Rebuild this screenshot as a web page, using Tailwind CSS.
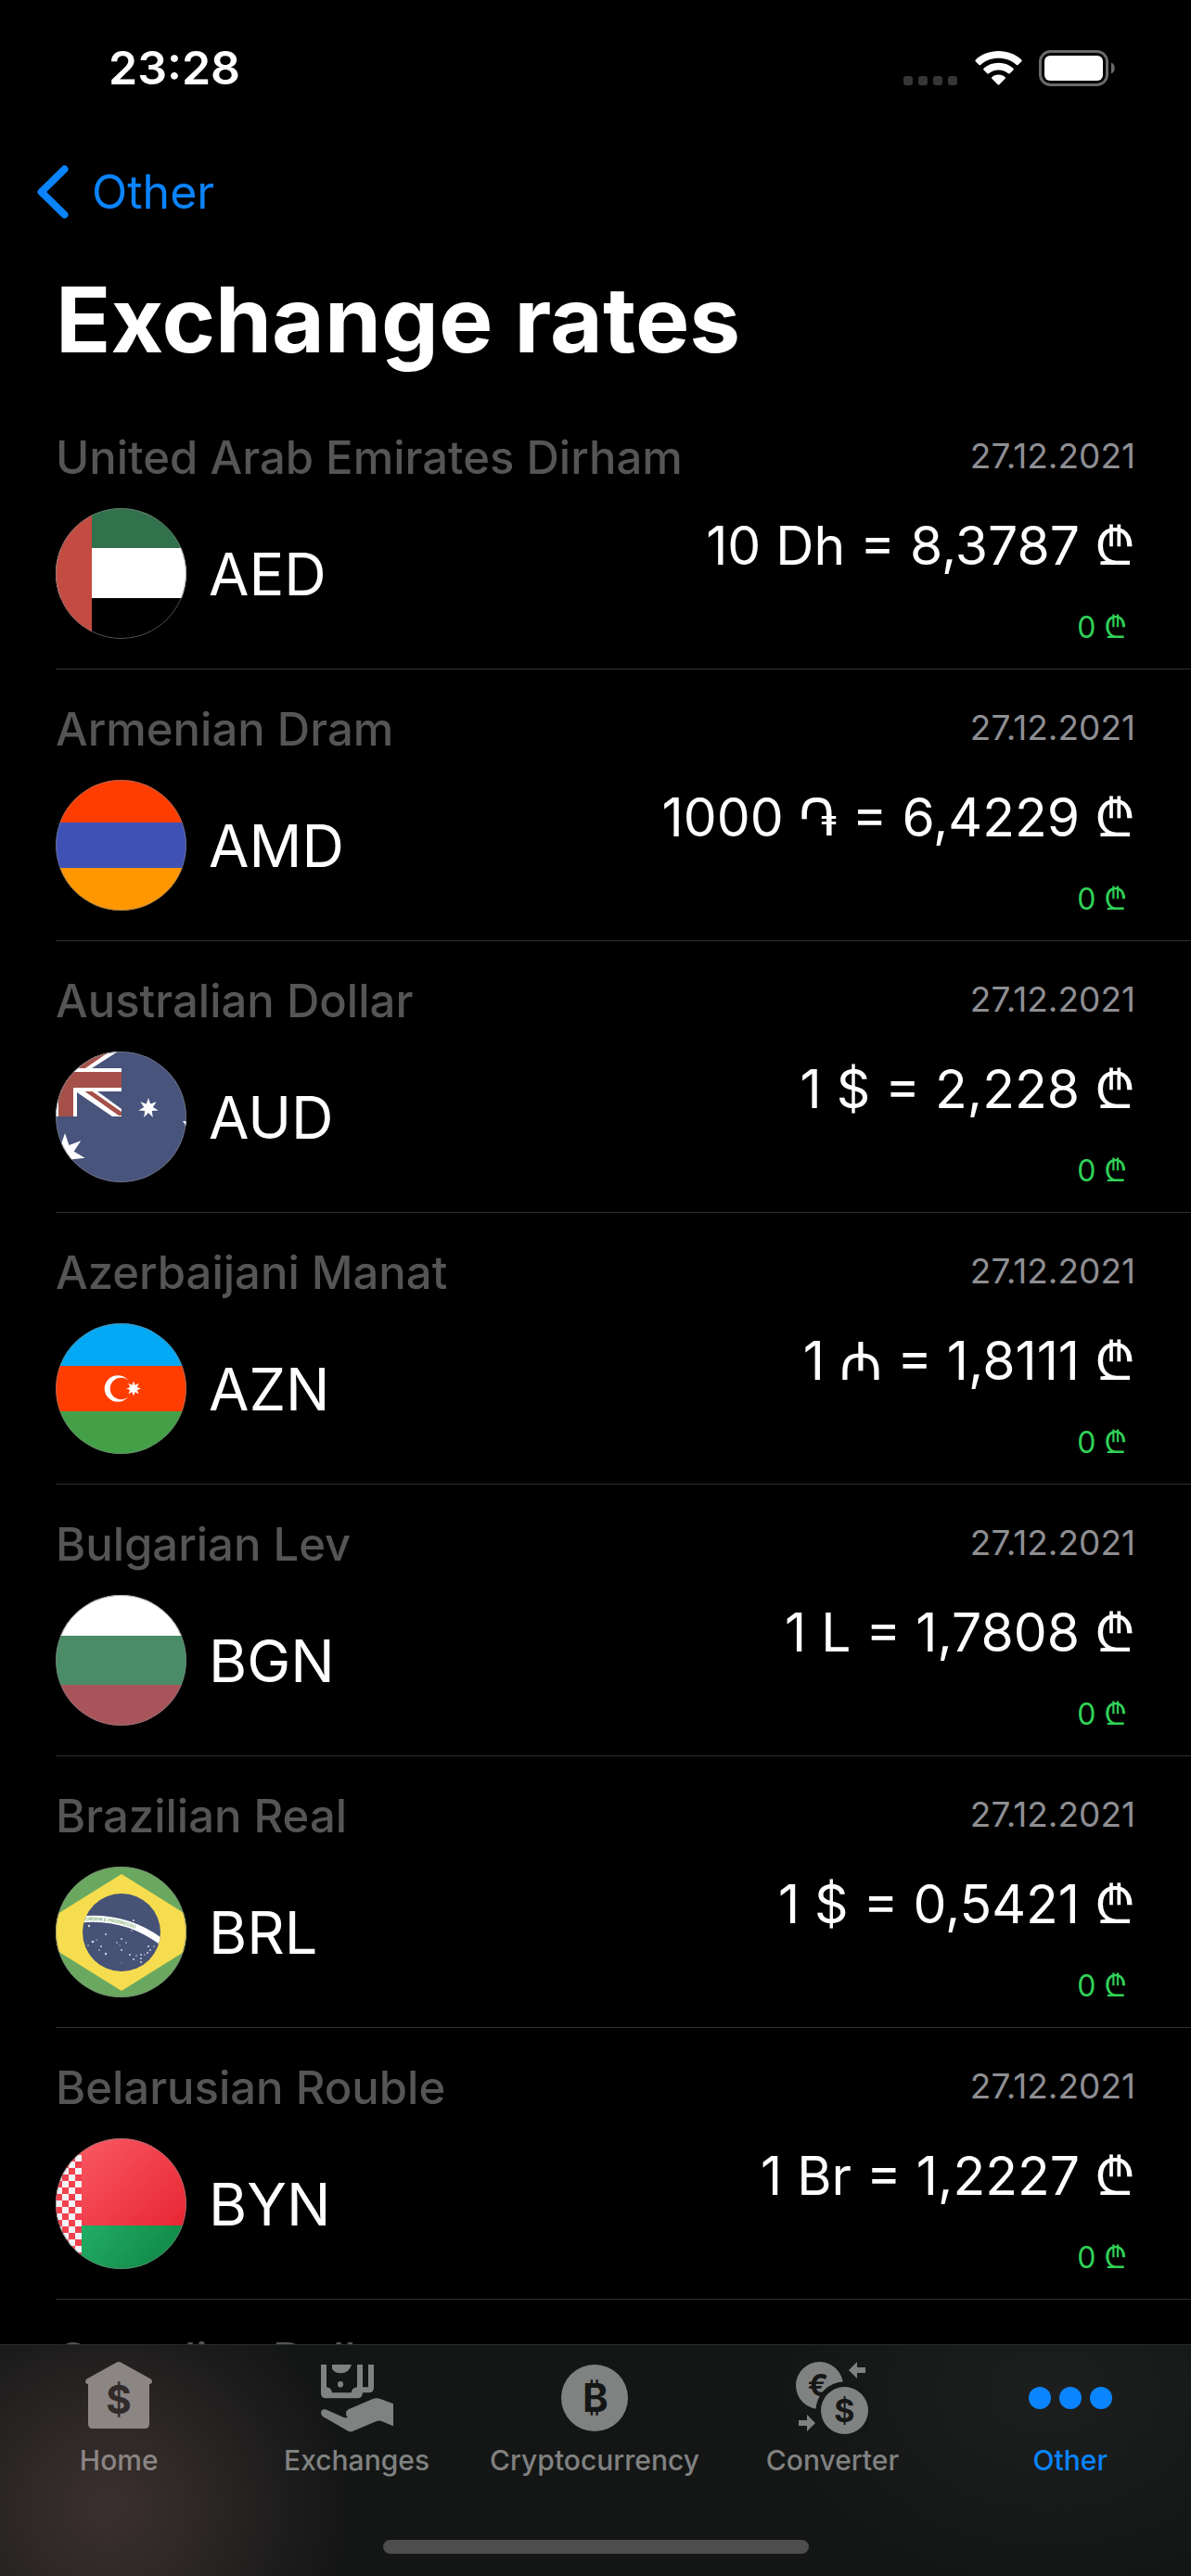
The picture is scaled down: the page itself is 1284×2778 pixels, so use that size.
<!DOCTYPE html>
<html lang="en">
<head>
    <meta charset="UTF-8">
    <meta name="viewport" content="width=device-width, initial-scale=1.0">
    <!-- Include Tailwind CSS -->
    <script src="https://cdn.jsdelivr.net/npm/@tailwindcss/browser@4"></script>
    <title>Exchange rates</title>
</head>
<body class="bg-black text-white font-['Inter','DejaVu_Sans',sans-serif] h-screen flex flex-col overflow-hidden">

    <!-- Status bar -->
    <div class="h-[146px] shrink-0 flex items-center justify-between pl-[117px] pr-[82px]">
        <span class="text-[50px] leading-[60px] font-semibold">23:28</span>
        <div class="flex items-center gap-[18px]">
            <svg class="w-[59px] h-[39px]" viewBox="0 0 59 39" fill="#363636">
                <rect x="0" y="28" width="10" height="10" rx="3"/>
                <rect x="16" y="28" width="10" height="10" rx="3"/>
                <rect x="32" y="28" width="10" height="10" rx="3"/>
                <rect x="48" y="28" width="10" height="10" rx="3"/>
            </svg>
            <svg class="w-[51px] h-[39px]" viewBox="0 0 51 39" fill="#fff">
                <path d="M25.500 1C35 1 44 4.500 50.300 10.500Q51 11.500 50.300 12.300L46.500 16Q45.700 16.700 44.800 16C39.500 11.300 32.800 8.800 25.500 8.800S11.500 11.300 6.200 16Q5.300 16.700 4.500 16L.7 12.300Q0 11.500.7 10.500C7 4.500 16 1 25.500 1Z"/>
                <path d="M25.500 13.800C31.800 13.800 37.300 16 41.500 19.800Q42.200 20.600 41.500 21.400L37.700 25.200Q36.900 25.900 36 25.200C33.200 22.800 29.600 21.400 25.500 21.400S17.800 22.800 15 25.200Q14.100 25.900 13.300 25.200L9.500 21.400Q8.800 20.600 9.500 19.800C13.700 16 19.200 13.800 25.500 13.800Z"/>
                <path d="M25.500 26.600C28.500 26.600 30.800 27.600 32.700 29.200Q33.400 30 32.700 30.800L26.300 37.200Q25.500 38 24.700 37.200L18.300 30.800Q17.600 30 18.300 29.200C20.200 27.600 22.500 26.600 25.500 26.600Z"/>
            </svg>
            <svg class="w-[82px] h-[39px]" viewBox="0 0 82 39">
                <rect x="1.500" y="1.500" width="72" height="36" rx="11" fill="none" stroke="#6a6a6a" stroke-width="3"/>
                <rect x="6" y="6" width="63" height="27" rx="6" fill="#fff"/>
                <path d="M78 13.500C83 15.500 83 23.500 78 25.500Z" fill="#6a6a6a"/>
            </svg>
        </div>
    </div>

    <!-- Navigation -->
    <header class="shrink-0">
        <a href="#" class="h-[122px] inline-flex items-center gap-[25px] pl-[40px] text-[#0a84ff] text-[50px] leading-[60px]">
            <svg class="w-[34px] h-[58px]" viewBox="0 0 34 58" fill="none" stroke="#0a84ff" stroke-width="8" stroke-linecap="round" stroke-linejoin="round"><path d="M29.500 4.500L4.500 29L29.500 53.500"/></svg>
            Other
        </a>
        <h1 class="pl-[60px] mt-[17px] mb-[24px] text-[98px] leading-[120px] font-bold">Exchange rates</h1>
    </header>

    <!-- Rates -->
    <ul class="flex-1 min-h-0 overflow-hidden pl-[60px]">
        <li class="flex justify-between border-b border-[#303032] pr-[60px]">
            <div class="pt-[35px] pb-[32px]">
                <h2 class="text-[49px] leading-[60px] font-medium text-[#555]">United Arab Emirates Dirham</h2>
                <div class="mt-[24px] flex items-center gap-[24px]">
                    <svg class="w-[141px] h-[141px] rounded-full" viewBox="0 0 141 141">
                        <rect width="141" height="141" fill="#000"/>
                        <rect width="141" height="43" fill="#31714b"/>
                        <rect y="43" width="141" height="54" fill="#fff"/>
                        <rect width="39" height="141" fill="#c34b42"/>
                        <circle cx="70.5" cy="70.5" r="70" fill="none" stroke="#808080" stroke-opacity=".7"/>
                    </svg>
                    <span class="text-[63px] leading-[76px]">AED</span>
                </div>
            </div>
            <div class="pt-[41px] text-right">
                <p class="text-[37px] leading-[44px] text-[#8e8e93]">27.12.2021</p>
                <p class="mt-[37px] text-[57px] leading-[72px]">10 Dh = 8,3787 <span class="font-['Noto_Sans']">₾</span></p>
                <p class="mt-[31px] pr-[9px] text-[32px] leading-[40px] text-[#30d158]">0 <span class="font-['Noto_Sans']">₾</span></p>
            </div>
        </li>

        <li class="flex justify-between border-b border-[#303032] pr-[60px]">
            <div class="pt-[35px] pb-[32px]">
                <h2 class="text-[49px] leading-[60px] font-medium text-[#555]">Armenian Dram</h2>
                <div class="mt-[24px] flex items-center gap-[24px]">
                    <svg class="w-[141px] h-[141px] rounded-full" viewBox="0 0 141 141">
                        <rect width="141" height="46" fill="#ff3d00"/>
                        <rect y="46" width="141" height="49" fill="#3f51b5"/>
                        <rect y="95" width="141" height="46" fill="#ff9800"/>
                        <circle cx="70.5" cy="70.5" r="70" fill="none" stroke="#808080" stroke-opacity=".7"/>
                    </svg>
                    <span class="text-[63px] leading-[76px]">AMD</span>
                </div>
            </div>
            <div class="pt-[41px] text-right">
                <p class="text-[37px] leading-[44px] text-[#8e8e93]">27.12.2021</p>
                <p class="mt-[37px] text-[57px] leading-[72px]">1000 ֏ = 6,4229 <span class="font-['Noto_Sans']">₾</span></p>
                <p class="mt-[31px] pr-[9px] text-[32px] leading-[40px] text-[#30d158]">0 <span class="font-['Noto_Sans']">₾</span></p>
            </div>
        </li>

        <li class="flex justify-between border-b border-[#303032] pr-[60px]">
            <div class="pt-[35px] pb-[32px]">
                <h2 class="text-[49px] leading-[60px] font-medium text-[#555]">Australian Dollar</h2>
                <div class="mt-[24px] flex items-center gap-[24px]">
                    <svg class="w-[141px] h-[141px] rounded-full" viewBox="0 0 141 141">
                        <defs>
                            <symbol id="star7" viewBox="-100 -100 200 200">
                                <polygon fill="#fff" points="0,-100 20,-41 78,-62 44,-10 98,22 35,28 43,90 0,45 -43,90 -35,28 -98,22 -44,-10 -78,-62 -20,-41"/>
                            </symbol>
                        </defs>
                        <rect width="141" height="141" fill="#48547c"/>
                        <polygon points="15,22 45,0 67,0 39,18 39,22" fill="#fff"/>
                        <polygon points="24,18 46,0 58,0 32,18" fill="#a55049"/>
                        <polygon points="22,40 41,40 71,62 71,70 61,70 23,44" fill="#fff"/>
                        <polygon points="30,42 38,42 71,65 71,69 68,69" fill="#a55049"/>
                        <rect y="18" width="71" height="25" fill="#fff"/>
                        <rect width="23" height="70" fill="#fff"/>
                        <rect y="22" width="71" height="17" fill="#a55049"/>
                        <rect x="3" width="16" height="70" fill="#a55049"/>
                        <use href="#star7" x="89" y="50" width="22" height="22"/>
                        <use href="#star7" x="-12" y="88" width="44" height="44"/>
                        <path d="M137 75H141V82L139 78Z" fill="#fff"/>
                        <circle cx="70.5" cy="70.5" r="70" fill="none" stroke="#808080" stroke-opacity=".7"/>
                    </svg>
                    <span class="text-[63px] leading-[76px]">AUD</span>
                </div>
            </div>
            <div class="pt-[41px] text-right">
                <p class="text-[37px] leading-[44px] text-[#8e8e93]">27.12.2021</p>
                <p class="mt-[37px] text-[57px] leading-[72px]">1 $ = 2,228 <span class="font-['Noto_Sans']">₾</span></p>
                <p class="mt-[31px] pr-[9px] text-[32px] leading-[40px] text-[#30d158]">0 <span class="font-['Noto_Sans']">₾</span></p>
            </div>
        </li>

        <li class="flex justify-between border-b border-[#303032] pr-[60px]">
            <div class="pt-[35px] pb-[32px]">
                <h2 class="text-[49px] leading-[60px] font-medium text-[#555]">Azerbaijani Manat</h2>
                <div class="mt-[24px] flex items-center gap-[24px]">
                    <svg class="w-[141px] h-[141px] rounded-full" viewBox="0 0 141 141">
                        <rect width="141" height="46" fill="#03a9f4"/>
                        <rect y="46" width="141" height="49" fill="#ff3d00"/>
                        <rect y="95" width="141" height="46" fill="#43a047"/>
                        <circle cx="67" cy="70.5" r="14.3" fill="#fff"/>
                        <circle cx="70.5" cy="70.5" r="11.8" fill="#ff3d00"/>
                        <polygon fill="#fff" points="84,62.5 85.6,66.7 89.7,64.8 87.8,68.9 92,70.5 87.8,72.1 89.7,76.2 85.6,74.3 84,78.5 82.4,74.3 78.3,76.2 80.2,72.1 76,70.5 80.2,68.9 78.3,64.8 82.4,66.7"/>
                        <circle cx="70.5" cy="70.5" r="70" fill="none" stroke="#808080" stroke-opacity=".7"/>
                    </svg>
                    <span class="text-[63px] leading-[76px]">AZN</span>
                </div>
            </div>
            <div class="pt-[41px] text-right">
                <p class="text-[37px] leading-[44px] text-[#8e8e93]">27.12.2021</p>
                <p class="mt-[37px] text-[57px] leading-[72px]">1 <span class="font-['Noto_Sans']">₼</span> = 1,8111 <span class="font-['Noto_Sans']">₾</span></p>
                <p class="mt-[31px] pr-[9px] text-[32px] leading-[40px] text-[#30d158]">0 <span class="font-['Noto_Sans']">₾</span></p>
            </div>
        </li>

        <li class="flex justify-between border-b border-[#303032] pr-[60px]">
            <div class="pt-[35px] pb-[32px]">
                <h2 class="text-[49px] leading-[60px] font-medium text-[#555]">Bulgarian Lev</h2>
                <div class="mt-[24px] flex items-center gap-[24px]">
                    <svg class="w-[141px] h-[141px] rounded-full" viewBox="0 0 141 141">
                        <rect width="141" height="44" fill="#fff"/>
                        <rect y="44" width="141" height="53" fill="#4a8c68"/>
                        <rect y="97" width="141" height="44" fill="#a9545b"/>
                        <circle cx="70.5" cy="70.5" r="70" fill="none" stroke="#808080" stroke-opacity=".7"/>
                    </svg>
                    <span class="text-[63px] leading-[76px]">BGN</span>
                </div>
            </div>
            <div class="pt-[41px] text-right">
                <p class="text-[37px] leading-[44px] text-[#8e8e93]">27.12.2021</p>
                <p class="mt-[37px] text-[57px] leading-[72px]">1 L = 1,7808 <span class="font-['Noto_Sans']">₾</span></p>
                <p class="mt-[31px] pr-[9px] text-[32px] leading-[40px] text-[#30d158]">0 <span class="font-['Noto_Sans']">₾</span></p>
            </div>
        </li>

        <li class="flex justify-between border-b border-[#303032] pr-[60px]">
            <div class="pt-[35px] pb-[32px]">
                <h2 class="text-[49px] leading-[60px] font-medium text-[#555]">Brazilian Real</h2>
                <div class="mt-[24px] flex items-center gap-[24px]">
                    <svg class="w-[141px] h-[141px] rounded-full" viewBox="0 0 141 141">
                        <defs>
                            <clipPath id="globe"><circle cx="71" cy="71" r="42"/></clipPath>
                            <path id="motto" d="M32 58.500Q75 56 109 80"/>
                        </defs>
                        <rect width="141" height="141" fill="#6aa85f"/>
                        <polygon points="-30,71 71,8 172,71 71,134" fill="#f6dd4f"/>
                        <circle cx="71" cy="71" r="42" fill="#475277"/>
                        <path clip-path="url(#globe)" d="M26 57Q75 52 114 81" fill="none" stroke="#fff" stroke-width="7"/>
                        <text font-size="5" font-weight="600" fill="#7fb277"><textPath href="#motto">ORDEM E PROGRESSO</textPath></text>
                        <g fill="#d5d8e2">
                            <circle cx="36" cy="64" r="1.2"/><circle cx="40" cy="81" r="1.3"/><circle cx="44" cy="79" r=".7"/>
                            <circle cx="54" cy="73" r="1"/><circle cx="35" cy="85" r=".8"/><circle cx="49" cy="86" r=".9"/>
                            <circle cx="47" cy="90" r=".8"/><circle cx="54" cy="94" r="1.2"/><circle cx="71" cy="78" r=".9"/>
                            <circle cx="66" cy="82" r=".8"/><circle cx="76" cy="82" r=".8"/><circle cx="69" cy="85" r=".6"/>
                            <circle cx="71" cy="90" r="1"/><circle cx="80" cy="95" r="1"/><circle cx="84" cy="100" r="1"/>
                            <circle cx="87" cy="96" r=".8"/><circle cx="92" cy="95" r=".9"/><circle cx="92" cy="99" r=".9"/>
                            <circle cx="92" cy="103" r="1"/><circle cx="96" cy="95" r=".7"/><circle cx="99" cy="93" r="1"/>
                            <circle cx="102" cy="90" r=".9"/><circle cx="100" cy="86" r="1"/><circle cx="106" cy="86" r=".8"/>
                            <circle cx="84" cy="58" r="1"/><circle cx="82" cy="69" r=".8"/><circle cx="71" cy="104" r=".5"/>
                        </g>
                        <circle cx="70.5" cy="70.5" r="70" fill="none" stroke="#808080" stroke-opacity=".7"/>
                    </svg>
                    <span class="text-[63px] leading-[76px]">BRL</span>
                </div>
            </div>
            <div class="pt-[41px] text-right">
                <p class="text-[37px] leading-[44px] text-[#8e8e93]">27.12.2021</p>
                <p class="mt-[37px] text-[57px] leading-[72px]">1 $ = 0,5421 <span class="font-['Noto_Sans']">₾</span></p>
                <p class="mt-[31px] pr-[9px] text-[32px] leading-[40px] text-[#30d158]">0 <span class="font-['Noto_Sans']">₾</span></p>
            </div>
        </li>

        <li class="flex justify-between border-b border-[#303032] pr-[60px]">
            <div class="pt-[35px] pb-[32px]">
                <h2 class="text-[49px] leading-[60px] font-medium text-[#555]">Belarusian Rouble</h2>
                <div class="mt-[24px] flex items-center gap-[24px]">
                    <svg class="w-[141px] h-[141px] rounded-full" viewBox="0 0 141 141">
                        <defs>
                            <linearGradient id="red" gradientUnits="userSpaceOnUse" x1="30" y1="0" x2="125" y2="105"><stop stop-color="#f95863"/><stop offset="1" stop-color="#e72734"/></linearGradient>
                            <linearGradient id="green" gradientUnits="userSpaceOnUse" x1="35" y1="90" x2="95" y2="141"><stop stop-color="#22ac65"/><stop offset="1" stop-color="#138e4b"/></linearGradient>
                            <pattern id="checks" y="4" width="14" height="14" patternUnits="userSpaceOnUse">
                                <rect width="14" height="14" fill="#f3404d"/>
                                <rect x="7" width="7" height="7" fill="#f2f3f7"/>
                                <rect y="7" width="7" height="7" fill="#f2f3f7"/>
                            </pattern>
                        </defs>
                        <rect width="141" height="94" fill="url(#red)"/>
                        <rect y="94" width="141" height="47" fill="url(#green)"/>
                        <rect y="18" width="28" height="107" fill="url(#checks)"/>
                        <circle cx="70.5" cy="70.5" r="70" fill="none" stroke="#808080" stroke-opacity=".7"/>
                    </svg>
                    <span class="text-[63px] leading-[76px]">BYN</span>
                </div>
            </div>
            <div class="pt-[41px] text-right">
                <p class="text-[37px] leading-[44px] text-[#8e8e93]">27.12.2021</p>
                <p class="mt-[37px] text-[57px] leading-[72px]">1 Br = 1,2227 <span class="font-['Noto_Sans']">₾</span></p>
                <p class="mt-[31px] pr-[9px] text-[32px] leading-[40px] text-[#30d158]">0 <span class="font-['Noto_Sans']">₾</span></p>
            </div>
        </li>

        <li class="pt-[35px]">
            <h2 class="text-[49px] leading-[60px] font-medium text-[#555]">Canadian Dollar</h2>
        </li>
    </ul>

    <!-- Tab bar -->
    <nav class="shrink-0 h-[250px] flex flex-col justify-between border-t border-[#2b2c2c] bg-[#141615] bg-[radial-gradient(ellipse_260px_250px_at_9%_70%,#3b302f,#2c2726_40%,#1d1c1c_75%,transparent),radial-gradient(ellipse_300px_220px_at_88%_20%,#1d1f1e,transparent)]">
        <div class="grid grid-cols-5 pt-[18px] pr-[2px] text-[30px] leading-[36px] font-medium text-[#808281]">
            <a href="#" class="flex flex-col items-center gap-[10px] text-[#8b8583]">
                <svg class="w-[72px] h-[78px]" viewBox="0 0 72 78">
                    <path fill="currentColor" d="M33.500 .8Q36 -.8 38.500 .8L70.500 18.500Q72 19.500 72 21Q72 24 69 24V67Q69 72 64 72H8Q3 72 3 67V24Q0 24 0 21Q0 19.500 1.500 18.500Z"/>
                    <text x="36" y="56" text-anchor="middle" font-size="42" font-weight="700" fill="#302a29">$</text>
                </svg>
                Home
            </a>
            <a href="#" class="flex flex-col items-center gap-[10px]">
                <!-- Banknotes over an open hand -->
                <svg class="w-[78px] h-[78px]" viewBox="48 35 234 234" fill="currentColor">
                    <path fill-rule="evenodd" d="M48 44H66V117Q82 119 84 135H146Q148 119 165 117V44H183V117H201V44H219V118Q219 135 202 135H183Q182 153 166 153H65Q48 153 48 136Z"/>
                    <path d="M84 44H147Q138 72 113 72Q90 72 84 57Z"/>
                    <ellipse cx="111" cy="108" rx="9" ry="10"/>
                    <path d="M63 189L120 214Q130 217 136 215Q129 213 129 200Q129 194 137 189L214 156Q227 150 240 155L282 171V243L244 227Q236 224 228 227L150 260Q143 263 136 259L54 212Q48 208 48 199Q50 187 63 189Z"/>
                </svg>
                Exchanges
            </a>
            <a href="#" class="flex flex-col items-center gap-[10px]">
                <svg class="w-[72px] h-[78px]" viewBox="0 0 72 78">
                    <circle cx="36" cy="39" r="36" fill="currentColor"/>
                    <text x="37" y="54" text-anchor="middle" font-size="42" font-weight="700" fill="#141615">₿</text>
                </svg>
                Cryptocurrency
            </a>
            <a href="#" class="flex flex-col items-center gap-[10px]">
                <svg class="w-[78px] h-[78px]" viewBox="0 0 78 78">
                    <circle cx="25.5" cy="25.5" r="25.5" fill="currentColor"/>
                    <text x="24" y="37" text-anchor="middle" font-size="33" font-weight="700" fill="#151716">€</text>
                    <circle cx="52.5" cy="52.5" r="31" fill="#151716"/>
                    <circle cx="52.5" cy="52.5" r="25.5" fill="currentColor"/>
                    <text x="52.5" y="64.5" text-anchor="middle" font-size="34" font-weight="700" fill="#151716">$</text>
                    <path fill="currentColor" d="M57 9L66 0V6H75V12H66V18ZM21 66L12 57V63H3V69H12V75Z"/>
                </svg>
                Converter
            </a>
            <a href="#" class="flex flex-col items-center gap-[10px] text-[#0a84ff]">
                <svg class="w-[90px] h-[78px]" viewBox="0 0 90 78" fill="currentColor">
                    <circle cx="12" cy="39" r="12"/>
                    <circle cx="45" cy="39" r="12"/>
                    <circle cx="78" cy="39" r="12"/>
                </svg>
                Other
            </a>
        </div>
        <div class="mx-auto mb-[24px] w-[459px] h-[15px] rounded-full bg-[#4d4d4d]"></div>
    </nav>
</body>
</html>
